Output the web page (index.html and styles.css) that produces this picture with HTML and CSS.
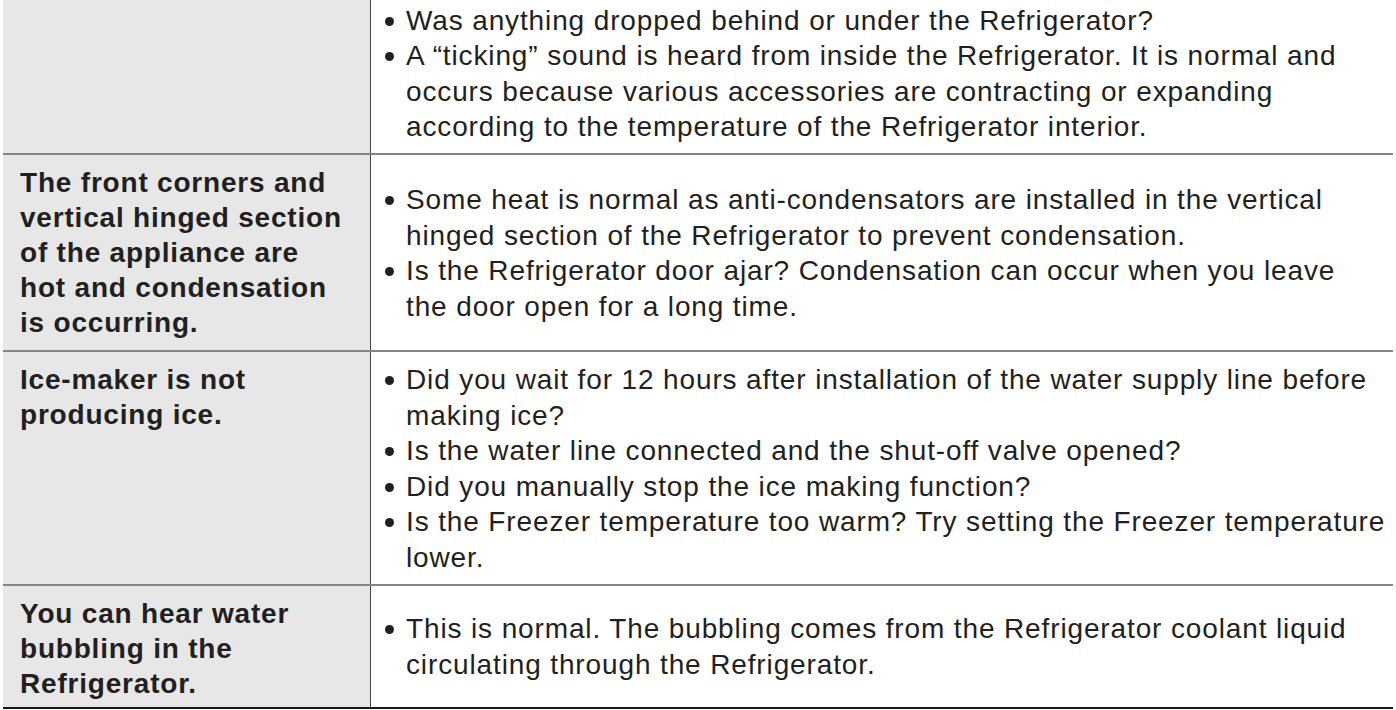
FILE: index.html
```html
<!DOCTYPE html>
<html lang="en">
<head>
<meta charset="utf-8">
<title>Troubleshooting</title>
<link rel="stylesheet" href="styles.css">
</head>
<body>
<div class="table">
  <div class="row row-first">
    <div class="problem"></div>
    <div class="solution">
      <ul>
        <li>Check that the floor is strong and level enough.</li>
        <li>Was anything dropped behind or under the Refrigerator?</li>
        <li>A “ticking” sound is heard from inside the Refrigerator. It is normal and occurs because various accessories are contracting or expanding according to the temperature of the Refrigerator interior.</li>
      </ul>
    </div>
  </div>
  <div class="row">
    <div class="problem">The front corners and vertical hinged section of the appliance are hot and condensation is occurring.</div>
    <div class="solution">
      <ul>
        <li>Some heat is normal as anti-condensators are installed in the vertical hinged section of the Refrigerator to prevent condensation.</li>
        <li>Is the Refrigerator door ajar? Condensation can occur when you leave the&nbsp;door open for a long time.</li>
      </ul>
    </div>
  </div>
  <div class="row">
    <div class="problem">Ice-maker is not producing ice.</div>
    <div class="solution">
      <ul>
        <li>Did you wait for 12 hours after installation of the water supply line before making ice?</li>
        <li>Is the water line connected and the shut-off valve opened?</li>
        <li>Did you manually stop the ice making function?</li>
        <li>Is the Freezer temperature too warm? Try setting the Freezer temperature lower.</li>
      </ul>
    </div>
  </div>
  <div class="row row-last">
    <div class="problem">You can hear water bubbling in the Refrigerator.</div>
    <div class="solution">
      <ul>
        <li>This is normal. The bubbling comes from the Refrigerator coolant liquid circulating through the Refrigerator.</li>
      </ul>
    </div>
  </div>
</div>
</body>
</html>
```

FILE: styles.css
```css
html, body {
  margin: 0;
  padding: 0;
  background: #ffffff;
}

body {
  font-family: "Liberation Sans", Arial, sans-serif;
  color: #231f20;
  overflow: hidden;
}

.table {
  margin: -43px 3px 0 3px;
}

.row {
  display: grid;
  grid-template-columns: 368px 1fr;
  border-top: 2px solid #858585;
}

.row-first {
  border-top: none;
}

.row-last {
  border-bottom: 2px solid #1a1a1a;
}

.problem {
  box-sizing: border-box;
  background: #e7e7e8;
  border-right: 1px solid #454545;
  font-weight: bold;
  font-size: 28px;
  line-height: 35px;
  letter-spacing: 0.8px;
  padding: 10px 23px 10px 17px;
}

.row-last .problem {
  padding-bottom: 6px;
}

.solution {
  display: flex;
  align-items: center;
  padding: 10px 3px 8px 14px;
  font-size: 28px;
  line-height: 35.6px;
  letter-spacing: 0.87px;
}

.solution ul {
  list-style: none;
  margin: 0;
  padding: 0;
}

.solution li {
  display: flex;
  align-items: flex-start;
}

.solution li::before {
  content: "";
  flex: 0 0 9px;
  height: 9px;
  margin: 14px 12px 0 0;
  border-radius: 50%;
  background: #231f20;
}
```
